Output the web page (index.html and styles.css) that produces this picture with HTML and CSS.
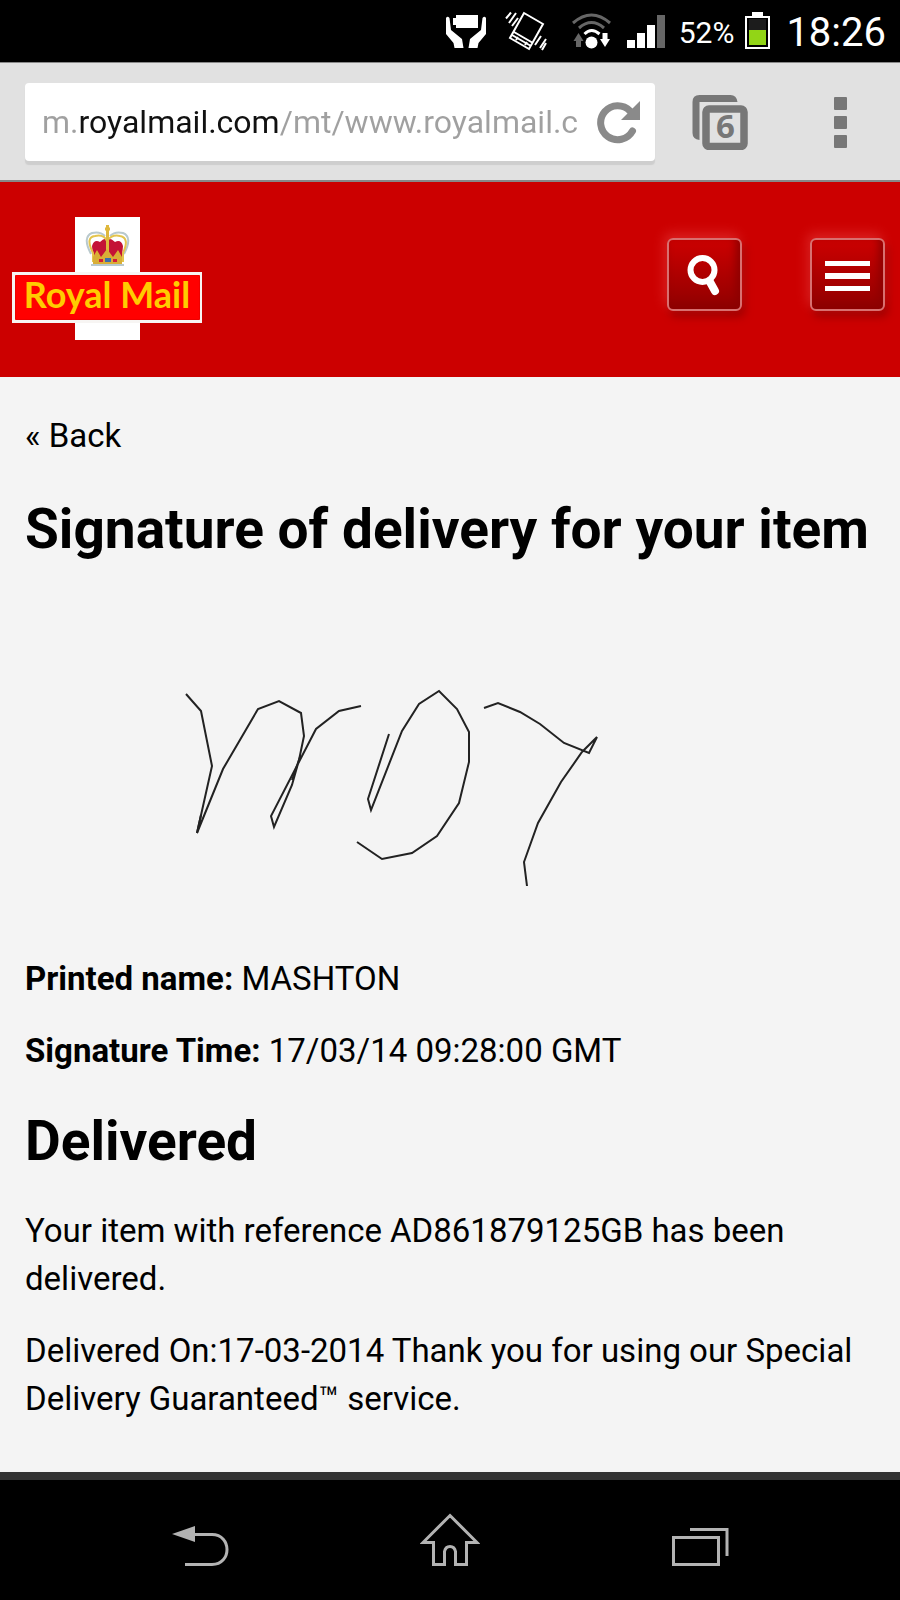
FILE: index.html
```html
<!DOCTYPE html>
<html lang="en">
<head>
<meta charset="utf-8">
<meta name="viewport" content="width=device-width, initial-scale=1">
<title>Royal Mail - Signature of delivery</title>
<link rel="stylesheet" href="styles.css">
</head>
<body>
<div class="status">
  <svg class="status-icon" width="56" height="62" viewBox="440 0 56 62" aria-hidden="true">
    <path fill="#fff" d="M456 15h22v13h-22v-3h-3v-7h3zM446 18q1.500-2.500 3.500 0l1.500 12 11 9 1.500 9h-9l-1-5-7.500-9zM486 18q-1.500-2.500-3.500 0l-1.500 12-11 9-1.500 9h9l1-5 7.500-9z"/>
  </svg>
  <svg class="status-icon" width="64" height="62" viewBox="496 0 64 62" aria-hidden="true">
    <path fill="none" stroke="#fff" stroke-width="2" d="M524 13l19 11-14 25-19-11zM514 32l19 11M512 35l19 11M518 37l-2 3M527 42l-2 3"/>
    <path fill="none" stroke="#fff" stroke-width="2" d="M511 12.500l-5 6M516 13l-7 10M518 18l-6 8M541 36l-6 9M546 39l-6 9M546 43l-4 7"/>
  </svg>
  <svg class="status-icon" width="60" height="62" viewBox="560 0 60 62" aria-hidden="true">
    <path fill="none" stroke="#666" stroke-width="3" d="M573 23q18.500-16 37 0M579 28q12.500-11 25 0"/>
    <path fill="none" stroke="#fff" stroke-width="3" d="M584.500 34q7-7 15 0"/>
    <circle cx="591.500" cy="42.500" r="6" fill="#fff"/>
    <path fill="#666" d="M578.500 33l5 8h-2.500v6h-5v-6h-2.500z"/>
    <path fill="#fff" d="M605 47l-5-8h2.500v-6h5v6h2.500z"/>
  </svg>
  <svg class="status-icon" width="52" height="62" viewBox="620 0 52 62" aria-hidden="true">
    <path fill="#fff" d="M627 40h8v8h-8zM637 33h8v15h-8zM647 25h8v23h-8z"/>
    <path fill="#666" d="M657 15h8v33h-8z"/>
  </svg>
  <span class="percent">52%</span>
  <svg class="status-icon" width="26" height="62" viewBox="744 0 26 62" aria-hidden="true">
    <path fill="#fff" d="M751 12h11v4h7v33h-25V16h7z"/>
    <path d="M746 18h21v29h-21z"/>
    <path fill="#1c1c1c" d="M748 19h17v11h-17z"/>
    <path fill="#92d516" d="M748 30h17v15h-17z"/>
  </svg>
  <time class="clock">18:26</time>
</div>

<div class="browser">
  <div class="omnibox">
    <input class="url" type="text" aria-label="Address" value="m.royalmail.com/mt/www.royalmail.c">
    <button class="plain" type="button" aria-label="Reload">
      <svg width="44" height="44" viewBox="595 100 44 44" aria-hidden="true">
        <path fill="none" stroke="#8a8a8a" stroke-width="7" stroke-linecap="round" d="M631.500 131a17 17 0 1 1-2.500-20"/>
        <path fill="#8a8a8a" d="M639 101v19h-19z"/>
      </svg>
    </button>
  </div>
  <button class="plain" type="button" aria-label="6 open tabs">
    <svg width="56" height="56" viewBox="692 94 56 56" aria-hidden="true">
      <path fill="#777" d="M692.500 102q0-7 7-7h31q6 0 7 7h-38v38q-7-1-7-7z"/>
      <rect x="706" y="109" width="38" height="37.500" rx="3" fill="#e1e1e1" stroke="#777" stroke-width="7.500"/>
      <text class="tab-count" x="725.500" y="138" text-anchor="middle">6</text>
    </svg>
  </button>
  <button class="plain" type="button" aria-label="Browser menu">
    <svg width="13" height="52" viewBox="0 0 13 52" aria-hidden="true">
      <g fill="#777"><rect y="1" width="13" height="13" rx="1"/><rect y="20" width="13" height="13" rx="1"/><rect y="39" width="13" height="13" rx="1"/></g>
    </svg>
  </button>
</div>

<header class="masthead">
  <a class="logo" href="#">
    <svg width="190" height="124" viewBox="12 217 190 124" role="img" aria-label="Royal Mail">
      <path fill="#fff" d="M75 217h65v123H75z"/>
      <path fill="#f7f5f3" d="M12 272h190v51H12z"/>
      <path fill="#f00" stroke="#e00" d="M15.500 275.500h184v44h-184z"/>
      <path fill="none" stroke="#b9c9cd" stroke-width="2" d="M91 254q-9-17 1-21 8-2 13 3M124 254q9-17-1-21-8-2-13 3M91 265h33"/>
      <path fill="#c41236" d="M92 246q2-7 8-4 4-4 7-3 4-1 8 3 6-3 8 4l-1 11H93z"/>
      <path fill="none" stroke="#e4c44c" stroke-width="2" d="M93 262v-9q-8-16 2-17 9-2 12 5 5-7 13-5 10 2 3 17v9"/>
      <path fill="none" stroke="#dfb83c" stroke-width="3" d="M107.500 225v30M105 229h5"/>
      <path fill="#d9ae36" d="M93 257l4-7 4 7 6-8 6 8 5-7 4 7v7H93z"/>
      <path fill="#d51c38" d="M99 259h4v3h-4zM113 259h4v3h-4z"/>
      <path fill="#3b6cab" d="M105 258h6v4h-6z"/>
      <text class="logo-text" x="107" y="308" text-anchor="middle">Royal Mail</text>
    </svg>
  </a>
  <div class="tools">
    <button class="tool" type="button" aria-label="Search">
      <svg width="71" height="69" viewBox="670 239 71 69" aria-hidden="true">
        <circle cx="703.500" cy="269" r="12" fill="none" stroke="#fff" stroke-width="6"/>
        <path stroke="#fff" stroke-width="8" stroke-linecap="round" d="M711 281l5 9"/>
      </svg>
    </button>
    <button class="tool" type="button" aria-label="Menu">
      <svg width="71" height="69" viewBox="812 239 71 69" aria-hidden="true">
        <path fill="#fff" d="M825 260h45v5h-45zM825 272h45v6h-45zM825 285h45v5h-45z"/>
      </svg>
    </button>
  </div>
</header>

<main class="content">
  <a class="back" href="#">« Back</a>
  <h1>Signature of delivery for your item</h1>
  <svg class="signature" viewBox="25 585 850 346" role="img" aria-label="Signature">
    <path d="M186 694L201 711 212 766 197 833 223 769 258 709 279 701 301 713 304 736 299 760 292 785 274 827 271 816 316 729 339 711 361 706"/>
    <path d="M197 833L201 815M292 780L300 757"/>
    <path d="M389 734L368 799 371 810 402 731 419 704 439 691 457 709 469 732 469 762 459 803 437 836 412 853 382 859 357 842"/>
    <path d="M484 708L498 703 520 712 540 724 564 743 589 753 597 737 582 752 561 782 538 823 524 862 527 886"/>
  </svg>
  <p><strong>Printed name:</strong> MASHTON</p>
  <p><strong>Signature Time:</strong> 17/03/14 09:28:00 GMT</p>
  <h2>Delivered</h2>
  <p>Your item with reference AD861879125GB has been delivered.</p>
  <p>Delivered On:17-03-2014 Thank you for using our Special Delivery Guaranteed™ service.</p>
</main>

<nav class="system" aria-label="System">
  <button class="key" type="button" aria-label="Back">
    <svg width="60" height="56" viewBox="170 1511 60 56" aria-hidden="true">
      <path fill="#b3b3b3" d="M172 1533l23-8v16z"/>
      <path fill="none" stroke="#b3b3b3" stroke-width="3" d="M194 1533.500h18c20 0 20 30 0 30h-27"/>
    </svg>
  </button>
  <button class="key" type="button" aria-label="Home">
    <svg width="60" height="56" viewBox="420 1511 60 56" aria-hidden="true">
      <path fill="none" stroke="#b3b3b3" stroke-width="3" d="M450 1514.500l27 27h-10.500v22h-11v-13q-1-5-5.500-5t-5.500 5v13h-11v-22H423z"/>
    </svg>
  </button>
  <button class="key" type="button" aria-label="Recent apps">
    <svg width="60" height="56" viewBox="670 1511 60 56" aria-hidden="true">
      <path fill="none" stroke="#b3b3b3" stroke-width="3" d="M673.500 1536.500h45v27h-45zM690 1528.500h37V1555"/>
    </svg>
  </button>
</nav>
</body>
</html>
```
FILE: styles.css
```css
* {
  box-sizing: border-box;
}

body {
  margin: 0;
  min-height: 100vh;
  display: flex;
  flex-direction: column;
  background: #f4f4f4;
  color: #000;
  font-family: Roboto, "Liberation Sans", sans-serif;
  font-size: 33px;
  line-height: 48px;
}

svg {
  display: block;
}

button {
  padding: 0;
  border: 0;
  background: none;
  font: inherit;
  cursor: pointer;
}

.status {
  display: flex;
  align-items: center;
  justify-content: flex-end;
  height: 62px;
  padding-right: 14px;
  background: #000;
  color: #fff;
}

.status-icon {
  flex: none;
}

.percent {
  margin: 0 11px 0 7px;
  padding-top: 3px;
  font-size: 30px;
}

.clock {
  margin-left: 15px;
  padding-top: 4px;
  font-size: 40px;
}

.browser {
  display: flex;
  align-items: center;
  height: 120px;
  padding: 0 53px 0 25px;
  border-top: 1px solid #888;
  border-bottom: 2px solid #888;
  background: #e1e1e1;
}

.omnibox {
  flex: 1;
  display: flex;
  align-items: center;
  gap: 12px;
  height: 78px;
  margin-right: 37px;
  padding: 0 15px 0 17px;
  border-radius: 4px;
  background: #fff;
  box-shadow: 0 4px 1px #cecece;
}

.url {
  flex: 1;
  min-width: 0;
  height: 56px;
  padding: 0;
  border: 0;
  outline: 0;
  background: linear-gradient(90deg, #a0a0a0 36px, #111 36px 237px, #a0a0a0 237px);
  -webkit-background-clip: text;
  background-clip: text;
  -webkit-text-fill-color: transparent;
  color: #111;
  font: inherit;
  font-size: 32px;
}

.browser > .plain:last-child {
  margin-left: 86px;
}

.tab-count {
  fill: #777;
  font: bold 33px "Open Sans", sans-serif;
}

.masthead {
  display: flex;
  align-items: center;
  justify-content: space-between;
  height: 195px;
  padding: 0 15px 2px 12px;
  background: #c00;
}

.logo-text {
  fill: #fc0;
  font: bold 36px Lato, sans-serif;
}

.tools {
  display: flex;
  gap: 68px;
  padding-bottom: 8px;
}

.tool {
  border: 2px solid #d87070;
  border-radius: 6px;
  background: linear-gradient(#c00, #a80000 60%, #900000);
  box-shadow: -3px -5px 12px #db2020, 3px 6px 8px #a00000, inset -4px -4px 8px #8c0000;
}

.content {
  flex: 1;
  padding: 35px 25px 24px;
}

.back {
  display: block;
  color: inherit;
  text-decoration: none;
}

h1,
h2 {
  font-size: 55px;
  line-height: 64px;
  font-weight: 700;
}

h1 {
  margin: 37px 0 24px;
}

h2 {
  margin: 34px 0;
}

p {
  margin: 24px 0;
}

.signature {
  width: 100%;
  fill: none;
  stroke: #222;
  stroke-width: 2;
}

.system {
  display: flex;
  align-items: center;
  height: 128px;
  padding: 0 75px;
  border-top: 8px solid #333;
  background: #000;
}

.key {
  flex: 1;
  display: flex;
  justify-content: center;
}
```
